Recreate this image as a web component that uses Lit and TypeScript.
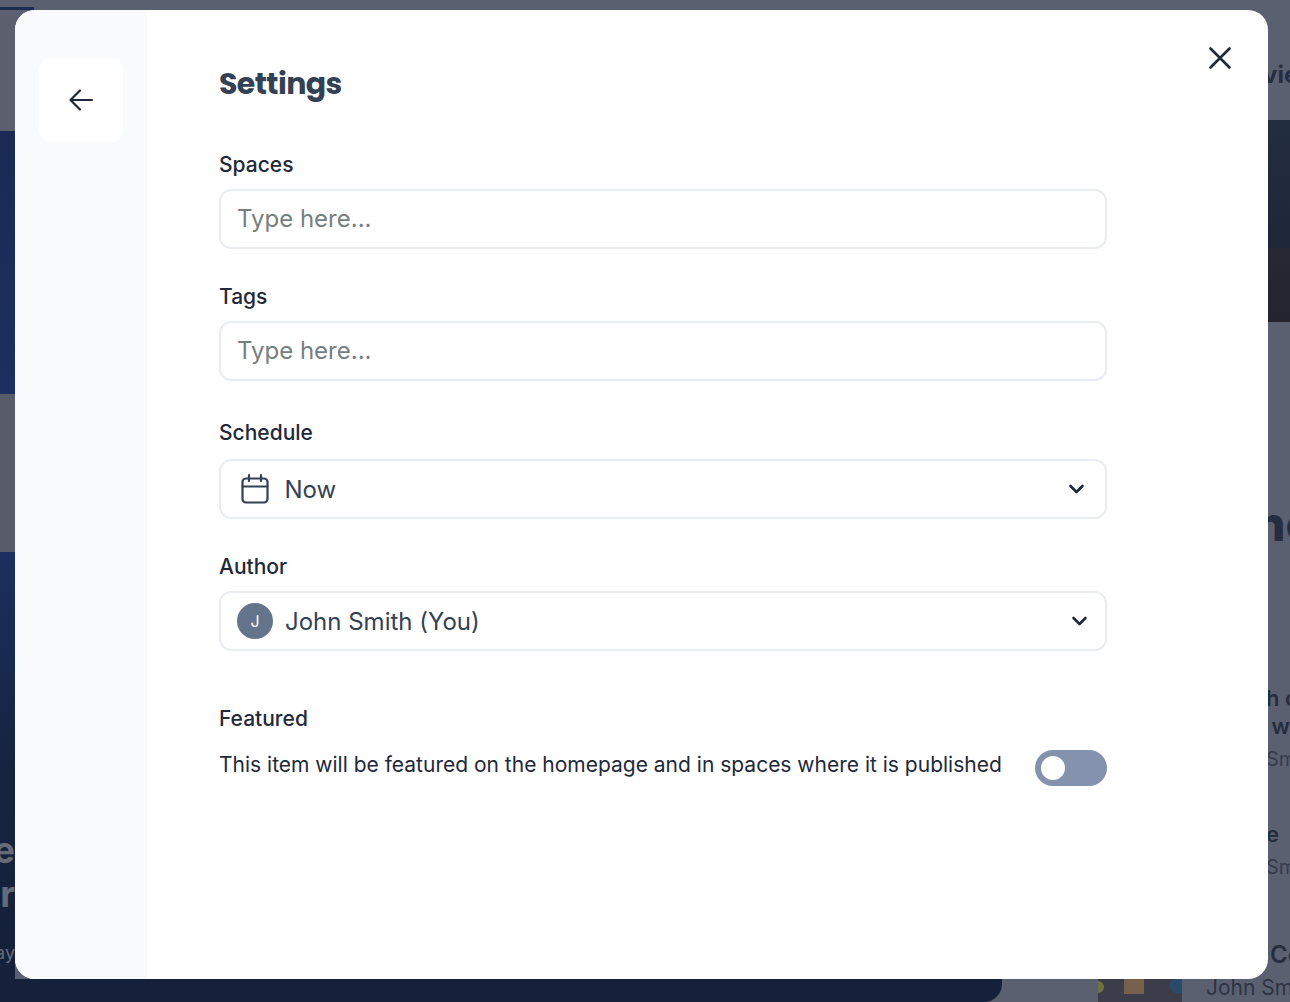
import { LitElement, html, css } from 'lit';
import { customElement } from 'lit/decorators.js';

const chevron = html`<svg class="chevron" viewBox="0 0 14 10" fill="none" stroke="currentColor" stroke-width="2.2" stroke-linecap="round" stroke-linejoin="round"><path d="M2 2.5l5 5 5-5" /></svg>`;

@customElement('app-root')
export class AppRoot extends LitElement {
  static styles = css`
    :host {
      display: block;
      font-family: Inter, "Liberation Sans", sans-serif;
      color: #1e293b;
    }

    .page {
      display: grid;
      grid-template-columns: 15px 1253px 22px;
      grid-template-rows: 10px 969px 23px;
      width: 1290px;
      height: 1002px;
      overflow: hidden;
      background: #5b6070;
    }

    /* Page behind the modal */
    .top {
      grid-column: 1 / 4;
      display: flex;
      justify-content: space-between;
    }

    .top-tab {
      width: 34px;
      height: 3px;
      margin-top: 7px;
      background: #1b2c55;
    }

    .left {
      display: flex;
      flex-direction: column;
      overflow: hidden;
    }

    .left-gap-top {
      height: 121px;
      background: #5b5f6e;
    }

    .hero-a {
      height: 263px;
      background: linear-gradient(#1a2a55, #1b3060);
    }

    .left-gap {
      height: 158px;
      background: #585c69;
    }

    .hero-b {
      flex: 1;
      display: flex;
      flex-direction: column;
      align-items: flex-end;
      background: linear-gradient(#1b3060 0, #16233f 52%, #15213a 100%);
      color: #666b78;
      font-weight: 700;
      white-space: nowrap;
    }

    .hero-title {
      font-size: 36px;
      line-height: 44px;
    }

    .hero-title.first {
      margin-top: 276px;
    }

    .hero-sub {
      margin-top: 26px;
      font-size: 18px;
      line-height: 22px;
      font-weight: 400;
    }

    .right {
      display: flex;
      flex-direction: column;
      overflow: hidden;
      color: #252d40;
      white-space: nowrap;
    }

    .right-head {
      height: 110px;
      padding-top: 49px;
      margin-left: -5px;
      box-sizing: border-box;
      font-size: 24px;
      font-weight: 700;
      line-height: 32px;
    }

    .cover-a {
      height: 128px;
      background: linear-gradient(#232d40, #1d2738);
    }

    .cover-b {
      height: 74px;
      background: linear-gradient(#282834, #23242f);
    }

    .right-big {
      margin: 175px 0 0 -13px;
      font-size: 48px;
      line-height: 54px;
      font-weight: 800;
    }

    .right-item {
      margin-left: -2px;
      font-size: 22px;
      line-height: 28px;
      font-weight: 600;
    }

    .right-item.first {
      margin-top: 133px;
    }

    .right-meta {
      margin: 5px 0 0 -2px;
      font-size: 20px;
      line-height: 28px;
      color: #363c4e;
    }

    .right-item.solo {
      margin-top: 47px;
    }

    .right-item.last {
      margin: 60px 0 0 2px;
      font-size: 24px;
    }

    .bottom {
      grid-column: 1 / 4;
      display: flex;
      overflow: hidden;
    }

    .bottom-hero {
      width: 1002px;
      height: 23px;
      flex: none;
      background: #15213a;
      border-bottom-right-radius: 18px;
    }

    .thumb {
      display: flex;
      width: 84px;
      height: 23px;
      flex: none;
      margin-left: 96px;
      background: #3c3d4b;
    }

    .thumb-green {
      width: 6px;
      height: 12px;
      margin-top: 2px;
      border-radius: 0 6px 6px 0;
      background: #6d7440;
    }

    .thumb-post {
      width: 20px;
      height: 15px;
      margin-left: 20px;
      background: #77604c;
    }

    .thumb-blue {
      width: 12px;
      height: 14px;
      margin-left: auto;
      border-radius: 6px 0 0 6px;
      background: #2a4a6a;
    }

    .bottom-name {
      margin-left: 24px;
      font-size: 21px;
      line-height: 18px;
      color: #2d3346;
      white-space: nowrap;
    }

    /* Modal */
    .modal {
      display: flex;
      border-radius: 20px;
      overflow: hidden;
      background: #fff;
    }

    .side {
      flex: none;
      width: 132px;
      box-sizing: border-box;
      padding: 48px 24px;
      background: #f8fafc;
    }

    .back {
      display: flex;
      align-items: center;
      justify-content: center;
      width: 84px;
      height: 84px;
      border-radius: 12px;
      background: #fff;
      color: #1e293b;
    }

    .back svg {
      width: 30px;
      height: 30px;
    }

    .main {
      flex: 1;
      display: flex;
      align-items: flex-start;
      padding: 0 0 0 72px;
    }

    .form {
      width: 888px;
      flex: none;
    }

    h1 {
      margin: 52px 0 0;
      font-family: Poppins, Inter, sans-serif;
      font-size: 30px;
      line-height: 44px;
      font-weight: 700;
      letter-spacing: -0.6px;
      color: #334155;
    }

    .label {
      display: block;
      font-size: 21px;
      line-height: 28px;
      font-weight: 500;
      margin-bottom: 10px;
      color: #1e293b;
    }

    .field {
      margin-top: 34px;
    }

    .field.first {
      margin-top: 45px;
    }

    .field.spaced {
      margin-top: 38px;
    }

    .field.spaced .label {
      margin-bottom: 12px;
    }

    .control {
      display: flex;
      align-items: center;
      box-sizing: border-box;
      width: 100%;
      height: 60px;
      padding: 0 16px;
      border: 2px solid #eaecf3;
      border-radius: 12px;
      background: #fff;
      font-size: 24px;
      color: #334155;
    }

    .placeholder {
      margin-top: -2px;
      color: #76807f;
    }

    .control svg.calendar {
      flex: none;
      width: 30px;
      height: 32px;
      margin-left: 3px;
      margin-right: 14.5px;
      color: #334155;
    }

    .avatar {
      flex: none;
      display: flex;
      align-items: center;
      justify-content: center;
      width: 36px;
      height: 36px;
      margin-right: 12px;
      border-radius: 50%;
      background: #64748b;
      color: #fff;
      font-size: 16px;
    }

    .chevron {
      flex: none;
      width: 17px;
      height: 12px;
      margin-left: auto;
      margin-right: 4px;
      color: #1e293b;
    }

    .control.author .chevron {
      margin-right: 1px;
    }

    .featured {
      margin-top: 54px;
    }

    .featured-title {
      font-size: 21px;
      line-height: 28px;
      font-weight: 500;
      color: #1e293b;
    }

    .featured-row {
      display: flex;
      align-items: center;
      justify-content: space-between;
      margin-top: 17px;
      font-size: 21px;
      line-height: 36px;
      color: #1e293b;
    }

    .featured-row span {
      margin-top: -6px;
    }

    .toggle {
      display: flex;
      align-items: center;
      flex: none;
      box-sizing: border-box;
      width: 72px;
      height: 36px;
      padding: 0 6px;
      border-radius: 18px;
      background: #8592ad;
    }

    .knob {
      width: 24px;
      height: 24px;
      border-radius: 50%;
      background: #fff;
    }

    .close {
      margin: 31px 0 0 100px;
      width: 26px;
      height: 34px;
      flex: none;
      display: flex;
      align-items: center;
      justify-content: center;
      color: #1e293b;
    }

    .close svg {
      width: 26px;
      height: 26px;
    }
  `;

  render() {
    return html`
      <div class="page">
        <div class="top"><div class="top-tab"></div></div>

        <div class="left">
          <div class="left-gap-top"></div>
          <div class="hero-a"></div>
          <div class="left-gap"></div>
          <div class="hero-b">
            <div class="hero-title first">e</div>
            <div class="hero-title">r</div>
            <div class="hero-sub">ay</div>
          </div>
        </div>

        <div class="modal">
          <aside class="side">
            <div class="back">
              <svg viewBox="0 0 30 30" fill="none" stroke="currentColor" stroke-width="2.2" stroke-linecap="round" stroke-linejoin="round">
                <path d="M26 15H4.5M14 5.5L4.5 15l9.5 9.5" />
              </svg>
            </div>
          </aside>
          <div class="main">
            <div class="form">
              <h1>Settings</h1>

              <div class="field first">
                <span class="label">Spaces</span>
                <div class="control"><span class="placeholder">Type here...</span></div>
              </div>

              <div class="field">
                <span class="label">Tags</span>
                <div class="control"><span class="placeholder">Type here...</span></div>
              </div>

              <div class="field spaced">
                <span class="label">Schedule</span>
                <div class="control">
                  <svg class="calendar" viewBox="0 0 30 32" fill="none" stroke="currentColor" stroke-width="2.2" stroke-linecap="round" stroke-linejoin="round">
                    <rect x="2.5" y="5.5" width="25" height="24" rx="3.5" />
                    <path d="M2.5 13.5h25M9 2v6M21 2v6" />
                  </svg>
                  Now
                  ${chevron}
                </div>
              </div>

              <div class="field">
                <span class="label">Author</span>
                <div class="control author">
                  <span class="avatar">J</span>
                  John Smith (You)
                  ${chevron}
                </div>
              </div>

              <div class="featured">
                <div class="featured-title">Featured</div>
                <div class="featured-row">
                  <span>This item will be featured on the homepage and in spaces where it is published</span>
                  <div class="toggle"><div class="knob"></div></div>
                </div>
              </div>
            </div>
            <div class="close">
              <svg viewBox="0 0 26 26" fill="none" stroke="currentColor" stroke-width="2.6" stroke-linecap="round">
                <path d="M3.5 3.5l19 19M22.5 3.5l-19 19" />
              </svg>
            </div>
          </div>
        </div>

        <div class="right">
          <div class="right-head">vie</div>
          <div class="cover-a"></div>
          <div class="cover-b"></div>
          <div class="right-big">nc</div>
          <div class="right-item first">h c</div>
          <div class="right-item">&nbsp;w</div>
          <div class="right-meta">Sm</div>
          <div class="right-item solo">e</div>
          <div class="right-meta">Sm</div>
          <div class="right-item last">Co</div>
        </div>

        <div class="bottom">
          <div class="bottom-hero"></div>
          <div class="thumb">
            <div class="thumb-green"></div>
            <div class="thumb-post"></div>
            <div class="thumb-blue"></div>
          </div>
          <div class="bottom-name">John Smith</div>
        </div>
      </div>
    `;
  }
}

declare global {
  interface HTMLElementTagNameMap {
    'app-root': AppRoot;
  }
}
